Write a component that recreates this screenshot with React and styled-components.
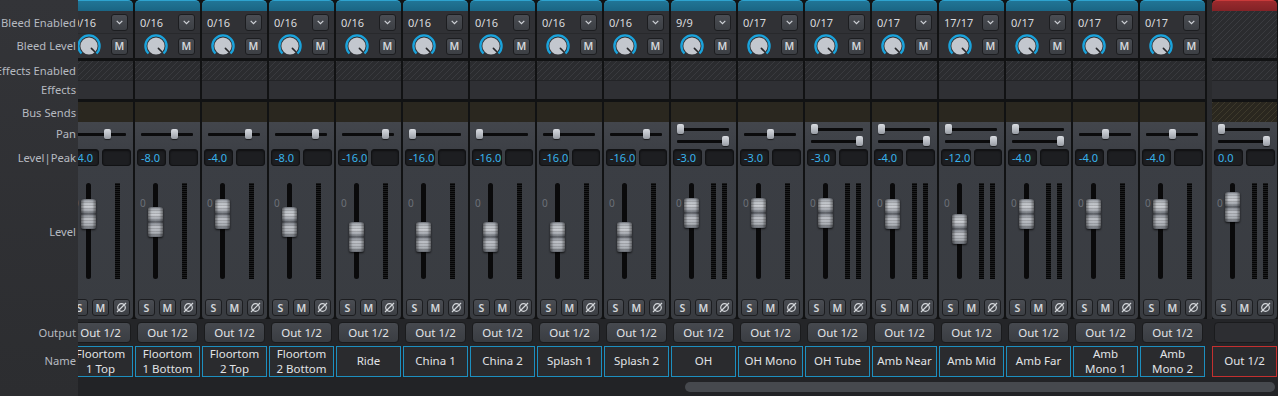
import React from 'react';
import styled, { createGlobalStyle, css } from 'styled-components';

const GlobalStyle = createGlobalStyle`
  html, body { margin: 0; padding: 0; background: #222326; }
  body { font-family: "Noto Sans", "DejaVu Sans", sans-serif; overflow: hidden; }
  #root { width: 1278px; height: 396px; }
`;

const STRIPS = [
  { name: ['Floortom', '1 Top'], bleed: '0/16', pan: 0.66, level: -4 },
  { name: ['Floortom', '1 Bottom'], bleed: '0/16', pan: 0.66, level: -8 },
  { name: ['Floortom', '2 Top'], bleed: '0/16', pan: 0.83, level: -4 },
  { name: ['Floortom', '2 Bottom'], bleed: '0/16', pan: 0.83, level: -8 },
  { name: ['Ride'], bleed: '0/16', pan: 0.88, level: -16 },
  { name: ['China 1'], bleed: '0/16', pan: 0, level: -16 },
  { name: ['China 2'], bleed: '0/16', pan: 0, level: -16 },
  { name: ['Splash 1'], bleed: '0/16', pan: 0.23, level: -16 },
  { name: ['Splash 2'], bleed: '0/16', pan: 0.74, level: -16 },
  { name: ['OH'], bleed: '9/9', stereo: true, level: -3 },
  { name: ['OH Mono'], bleed: '0/17', pan: 0.5, level: -3 },
  { name: ['OH Tube'], bleed: '0/17', stereo: true, level: -3 },
  { name: ['Amb Near'], bleed: '0/17', stereo: true, level: -4 },
  { name: ['Amb Mid'], bleed: '17/17', stereo: true, level: -12 },
  { name: ['Amb Far'], bleed: '0/17', stereo: true, level: -4 },
  { name: ['Amb', 'Mono 1'], bleed: '0/17', pan: 0.5, level: -4 },
  { name: ['Amb', 'Mono 2'], bleed: '0/17', pan: 0.5, level: -4 },
];

const hatch = (bg, line) => css`
  background: repeating-linear-gradient(135deg, ${line} 0 1px, ${bg} 1px 4.25px);
`;

const Mixer = styled.div`
  display: flex;
  width: 1278px;
  height: 396px;
  background: #222326;
  overflow: hidden;
`;

const LabelCol = styled.div`
  width: 78px;
  flex: none;
  display: flex;
  flex-direction: column;
  background: linear-gradient(#333438, #2c2d30);
`;

const Label = styled.div`
  height: ${p => p.$h}px;
  margin-top: ${p => p.$mt || 0}px;
  padding: 0 2px ${p => p.$pb || 0}px 0;
  box-sizing: border-box;
  display: flex;
  justify-content: flex-end;
  align-items: center;
  overflow: hidden;
  white-space: nowrap;
  font-size: 11.2px;
  color: #b6bac0;
`;

const Main = styled.div`
  flex: 1;
  display: flex;
  flex-direction: column;
`;

const StripsRow = styled.div`
  display: flex;
  height: 377px;
  background: linear-gradient(to bottom, #111213 0 319px, #242528 319px);
`;

const Viewport = styled.div`
  width: 1129px;
  flex: none;
  overflow: hidden;
`;

const Track = styled.div`
  display: flex;
  gap: 2px;
  margin-left: -10px;
`;

const MasterGap = styled.div`
  width: 5px;
  flex: none;
  background: linear-gradient(to bottom, #2a2b2e 0 319px, #242528 319px);
`;

const Strip = styled.div`
  width: 65px;
  flex: none;
  display: flex;
  flex-direction: column;
`;

const Tab = styled.div`
  height: 11px;
  box-sizing: border-box;
  border-radius: 5px 5px 0 0;
  border-top: 1px solid ${p => (p.$master ? '#c93a3a' : '#2ea3cf')};
  background: ${p => (p.$master
    ? 'linear-gradient(#9a2a2d, #822226)'
    : 'linear-gradient(#217596, #1a6584)')};
`;

const Bleed = styled.div`
  height: 47px;
  display: flex;
  flex-direction: column;
  background: #303135;
  ${p => p.$master && hatch('#2b2c2f', '#3a3b3f')}
`;

const BleedTop = styled.div`
  height: 22px;
  display: flex;
  align-items: center;
  justify-content: space-between;
  padding: 0 5px;
  font-size: 11px;
  color: #d9dbde;
`;

const BleedBottom = styled.div`
  height: 25px;
  box-sizing: border-box;
  border-top: 1px solid #28292c;
  display: flex;
  align-items: center;
  justify-content: space-between;
  padding: 0 5px 0 9px;
`;

const SmallBtn = styled.div`
  width: 17px;
  height: 17px;
  box-sizing: border-box;
  border: 1px solid #1c1d20;
  border-radius: 3px;
  background: linear-gradient(#4a4d53, #3c3f44);
  display: flex;
  align-items: center;
  justify-content: center;
  font-size: 10.5px;
  font-weight: 600;
  color: #d4d7db;
`;

const FxEnabled = styled.div`
  height: 19px;
  margin-top: 3px;
  ${hatch('#2b2c2f', '#393a3e')}
`;

const Fx = styled.div`
  height: 19px;
  box-sizing: border-box;
  border-top: 1px solid #232427;
  background: #2f3034;
`;

const Bus = styled.div`
  height: 20px;
  margin-top: 3px;
  background: #2a271f;
  ${p => p.$master && hatch('#2a271f', '#3d392b')}
`;

const Body = styled.div`
  height: 197px;
  display: flex;
  flex-direction: column;
  border-radius: 0 0 4px 4px;
  background: linear-gradient(#43464c, #3b3e44 18%, #393c41);
`;

const PanArea = styled.div`
  height: 26px;
  box-sizing: border-box;
  padding-bottom: ${p => (p.$stereo ? 0 : 2)}px;
  display: flex;
  flex-direction: column;
  justify-content: center;
  gap: 2px;
`;

const PanTrack = styled.div`
  position: relative;
  height: 10px;
  width: 52px;
  margin-left: 6px;
  &::before {
    content: '';
    position: absolute;
    left: 0;
    right: 0;
    top: 4px;
    height: 3px;
    border-radius: 1px;
    background: #0b0b0c;
  }
`;

const PanThumb = styled.div`
  position: absolute;
  top: 0;
  width: 7px;
  height: 10px;
  border-radius: 2px;
  background: linear-gradient(#d9dce1, #b4b8bf 60%, #979ba2);
  box-shadow: 0 1px 1px rgba(0, 0, 0, 0.6);
`;

const LevelRow = styled.div`
  height: 18px;
  padding: 1px 2px 0;
  box-sizing: border-box;
  display: flex;
  gap: 3px;
`;

const ValueBox = styled.div`
  flex: 1;
  height: 17px;
  box-sizing: border-box;
  border: 1px solid #111214;
  border-radius: 3px;
  background: #1d1e21;
  box-shadow: inset 0 1px 2px rgba(0, 0, 0, 0.5);
  padding-left: 3px;
  font-size: 11px;
  line-height: 15px;
  color: #38b4ec;
`;

const FaderArea = styled.div`
  height: 133px;
  box-sizing: border-box;
  padding: 17px 0 0 4px;
  display: flex;
  align-items: flex-start;
`;

const ZeroMark = styled.div`
  width: 8px;
  padding-left: 1px;
  margin-top: 14px;
  font-size: 10px;
  line-height: 12px;
  color: #6c7077;
`;

const FaderTrack = styled.div`
  position: relative;
  width: 15px;
  height: 96px;
  &::before {
    content: '';
    position: absolute;
    left: 5px;
    top: 0;
    width: 5px;
    height: 96px;
    border-radius: 3px;
    background: #0a0a0b;
  }
`;

const FaderCap = styled.div`
  position: absolute;
  left: 0;
  width: 15px;
  height: 30px;
  border-radius: 2px;
  box-shadow: 0 1px 2px rgba(0, 0, 0, 0.7);
  background:
    linear-gradient(90deg, rgba(0,0,0,0.45) 0, rgba(0,0,0,0) 25%, rgba(255,255,255,0.06) 50%, rgba(0,0,0,0) 75%, rgba(0,0,0,0.45) 100%),
    repeating-linear-gradient(180deg, rgba(0,0,0,0.14) 0 1px, rgba(0,0,0,0) 1px 3px),
    linear-gradient(180deg, #7d8189 0, #b2b6bc 10%, #c6c9ce 25%, #9a9ea5 42%, #585c63 48%, #858991 54%, #babdc3 66%, #a9adb3 85%, #62666d 100%);
`;

const Meters = styled.div`
  display: flex;
  gap: 6px;
  margin-left: ${p => (p.$stereo ? 12 : 19)}px;
`;

const Meter = styled.div`
  width: 5px;
  height: 96px;
  background: repeating-linear-gradient(to bottom, #1b1c1d 0 1px, #050506 1px 2px);
`;

const ButtonRow = styled.div`
  height: 20px;
  padding-left: 3px;
  display: flex;
  gap: 4px;
`;

const Output = styled.div`
  height: 21px;
  margin: 3px 2px 0;
  box-sizing: border-box;
  border: 1px solid #1a1b1d;
  border-radius: 4px;
  background: ${p => (p.$empty ? '#2d2e32' : 'linear-gradient(#46494f, #3a3d42)')};
  display: flex;
  align-items: center;
  justify-content: center;
  font-size: 11.5px;
  color: #e2e4e7;
`;

const Name = styled.div`
  height: 31px;
  margin-top: 3px;
  box-sizing: border-box;
  border: 1px solid ${p => (p.$master ? '#c3302f' : '#1d8fbf')};
  background: #2a2b2e;
  display: flex;
  flex-direction: column;
  align-items: center;
  justify-content: center;
  font-size: 11.5px;
  line-height: 14.5px;
  color: #e1e3e6;
  white-space: nowrap;
`;

const ScrollArea = styled.div`
  height: 19px;
  padding-top: 5px;
  box-sizing: border-box;
`;

const ScrollThumb = styled.div`
  height: 10px;
  width: ${p => p.$width}px;
  margin-left: ${p => p.$left}px;
  border-radius: 5px;
  background: #46494e;
`;

const Knob = () => (
  <svg width="24" height="24" viewBox="0 0 24 24">
    <path d="M4.5 19.5 A10.6 10.6 0 1 1 19.5 19.5" fill="none" stroke="#1aa3dc" strokeWidth="2.3" />
    <circle cx="12" cy="12" r="8.6" fill="#c3c7ce" />
    <line x1="14.4" y1="14.4" x2="17.8" y2="17.8" stroke="#26272a" strokeWidth="1.6" strokeLinecap="round" />
  </svg>
);

const Chevron = () => (
  <svg width="7" height="5" viewBox="0 0 7 5">
    <polyline points="0.7,0.8 3.5,3.6 6.3,0.8" fill="none" stroke="#cfd2d7" strokeWidth="1.2" />
  </svg>
);

const PhaseIcon = () => (
  <svg width="11" height="11" viewBox="0 0 11 11">
    <circle cx="5.5" cy="5.5" r="3.8" fill="none" stroke="#d4d7db" strokeWidth="1.2" />
    <line x1="1" y1="10" x2="10" y2="1" stroke="#d4d7db" strokeWidth="1.2" />
  </svg>
);

const capTop = db => 9 + -db * 1.85;
const fmt = db => (db === 0 ? '0.0' : db.toFixed(1));

const StripBody = ({ stereo, pan, level }) => (
  <Body>
    <PanArea $stereo={stereo}>
      {stereo ? (
        <>
          <PanTrack><PanThumb style={{ left: 0 }} /></PanTrack>
          <PanTrack><PanThumb style={{ left: 45 }} /></PanTrack>
        </>
      ) : (
        <PanTrack><PanThumb style={{ left: pan * 45 }} /></PanTrack>
      )}
    </PanArea>
    <LevelRow>
      <ValueBox>{fmt(level)}</ValueBox>
      <ValueBox />
    </LevelRow>
    <FaderArea>
      <ZeroMark>0</ZeroMark>
      <FaderTrack>
        <FaderCap style={{ top: capTop(level) }} />
      </FaderTrack>
      <Meters $stereo={stereo}>
        <Meter />
        {stereo && <Meter />}
      </Meters>
    </FaderArea>
    <ButtonRow>
      <SmallBtn>S</SmallBtn>
      <SmallBtn>M</SmallBtn>
      <SmallBtn><PhaseIcon /></SmallBtn>
    </ButtonRow>
  </Body>
);

const ChannelStrip = ({ strip }) => (
  <Strip>
    <Tab />
    <Bleed>
      <BleedTop>
        <span>{strip.bleed}</span>
        <SmallBtn><Chevron /></SmallBtn>
      </BleedTop>
      <BleedBottom>
        <Knob />
        <SmallBtn>M</SmallBtn>
      </BleedBottom>
    </Bleed>
    <FxEnabled />
    <Fx />
    <Bus />
    <StripBody stereo={strip.stereo} pan={strip.pan} level={strip.level} />
    <Output>Out 1/2</Output>
    <Name>
      {strip.name.map(line => <span key={line}>{line}</span>)}
    </Name>
  </Strip>
);

const MasterStrip = () => (
  <Strip>
    <Tab $master />
    <Bleed $master />
    <FxEnabled />
    <Fx />
    <Bus $master />
    <StripBody stereo level={0} />
    <Output $empty />
    <Name $master>Out 1/2</Name>
  </Strip>
);

export default function App() {
  return (
    <>
      <GlobalStyle />
      <Mixer>
        <LabelCol>
          <Label $h={11} />
          <Label $h={22}>Bleed Enabled</Label>
          <Label $h={25}>Bleed Level</Label>
          <Label $h={19} $mt={3}>Effects Enabled</Label>
          <Label $h={19}>Effects</Label>
          <Label $h={20} $mt={3}>Bus Sends</Label>
          <Label $h={26} $pb={3}>Pan</Label>
          <Label $h={18}>Level|Peak</Label>
          <Label $h={133} $pb={3}>Level</Label>
          <Label $h={20} />
          <Label $h={21} $mt={3}>Output</Label>
          <Label $h={31} $mt={3} $pb={3}>Name</Label>
        </LabelCol>
        <Main>
          <StripsRow>
            <Viewport>
              <Track>
                {STRIPS.map((s, i) => <ChannelStrip key={i} strip={s} />)}
              </Track>
            </Viewport>
            <MasterGap />
            <MasterStrip />
          </StripsRow>
          <ScrollArea>
            <ScrollThumb $left={607} $width={590} />
          </ScrollArea>
        </Main>
      </Mixer>
    </>
  );
}
